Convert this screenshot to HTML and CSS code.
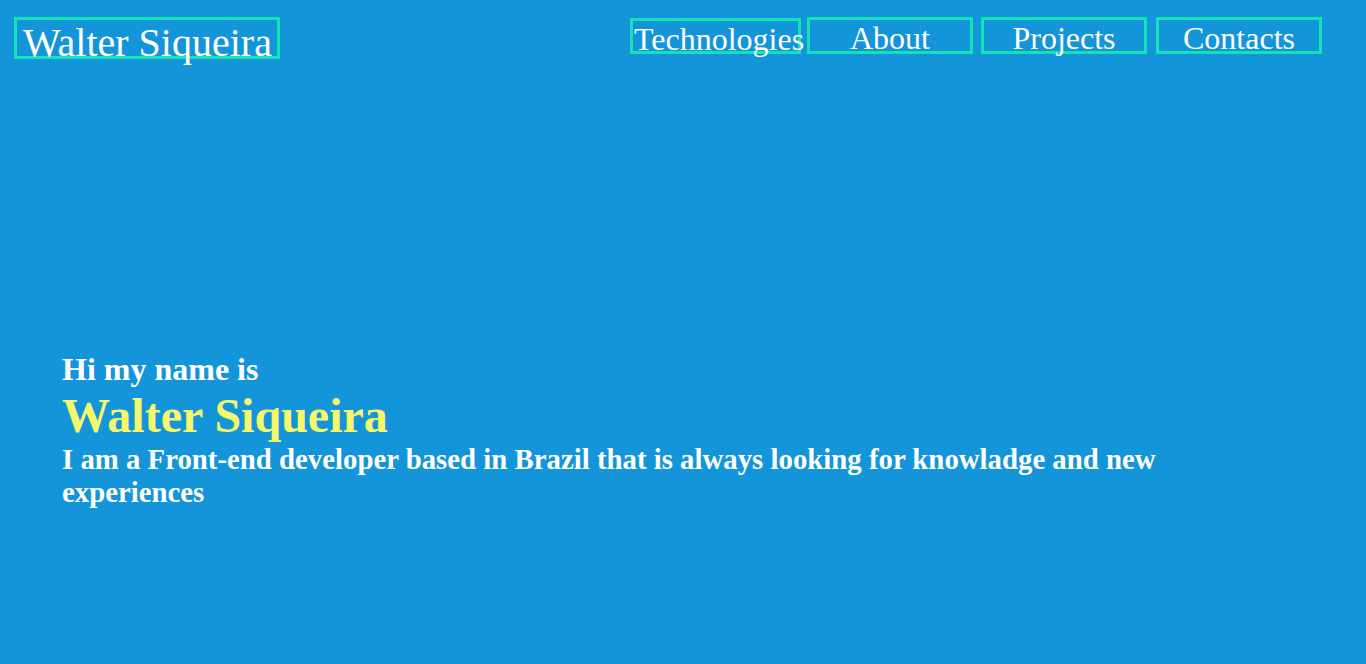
FILE: index.html
```html
<!DOCTYPE html>
<html lang="en">
<head>
<meta charset="utf-8">
<title>Walter Siqueira</title>
<link rel="stylesheet" href="styles.css">
</head>
<body>
<header class="header">
  <div class="logo">Walter Siqueira</div>
  <nav class="nav">
    <a class="nav-item nav-item-first" href="#technologies">Technologies</a>
    <a class="nav-item nav-item-about" href="#about">About</a>
    <a class="nav-item nav-item-projects" href="#projects">Projects</a>
    <a class="nav-item" href="#contacts">Contacts</a>
  </nav>
</header>
<main class="hero">
  <h2 class="hero-hi">Hi my name is</h2>
  <h1 class="hero-name">Walter Siqueira</h1>
  <p class="hero-text">I am a Front-end developer based in Brazil that is always looking for knowladge and new experiences</p>
</main>
</body>
</html>
```

FILE: styles.css
```css
html, body {
  margin: 0;
  padding: 0;
}
body {
  background: #1595d9;
  color: #ffffff;
  font-family: "Liberation Serif", "Times New Roman", serif;
  min-height: 664px;
}
.header {
  display: flex;
  justify-content: space-between;
  align-items: flex-start;
  padding: 17px 44px 0 14px;
}
.logo {
  box-sizing: border-box;
  width: 266px;
  height: 42px;
  border: 3px solid #12e2b5;
  font-size: 40px;
  line-height: 45px;
  padding-left: 6px;
  white-space: nowrap;
}
.nav {
  display: flex;
  align-items: flex-end;
}
.nav-item {
  box-sizing: border-box;
  display: block;
  width: 166px;
  height: 37px;
  border: 3px solid #12e2b5;
  color: #ffffff;
  text-decoration: none;
  font-size: 32px;
  line-height: 36px;
  text-align: center;
  white-space: nowrap;
}
.nav-item-first {
  width: 171px;
  height: 36px;
  text-align: left;
  padding-left: 1px;
  margin-right: 6px;
}
.nav-item-about {
  margin-right: 8px;
}
.nav-item-projects {
  margin-right: 9px;
}
.hero {
  padding: 292px 0 0 62px;
  width: 1140px;
}
.hero-hi {
  margin: 0;
  font-size: 32px;
  font-weight: bold;
}
.hero-name {
  margin: 0;
  font-size: 48px;
  font-weight: bold;
  color: #f7f76b;
}
.hero-text {
  margin: 0;
  font-size: 28.8px;
  font-weight: bold;
}
```
